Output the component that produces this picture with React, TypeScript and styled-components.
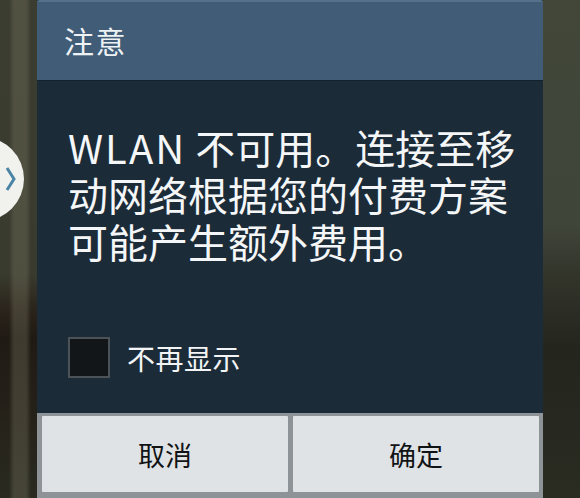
import styled, { createGlobalStyle } from "styled-components";

const GlobalStyle = createGlobalStyle`
  html, body {
    margin: 0;
    padding: 0;
    background: #2e3027;
  }
  body {
    font-family: "Noto Sans CJK SC", "Noto Sans", sans-serif;
  }
`;

const Screen = styled.div`
  width: 580px;
  height: 498px;
  display: flex;
  overflow: hidden;
`;

const SideStrip = styled.div<{ $side: "left" | "right" }>`
  position: relative;
  width: 37px;
  flex-shrink: 0;
  background: ${({ $side }) =>
    $side === "left"
      ? `linear-gradient(90deg, transparent 0 9px, rgba(120,118,95,0.35) 14px, rgba(120,118,95,0.35) 26px, transparent 31px),
         linear-gradient(180deg, #3b3d31 0%, #3a3b2f 55%, #2a241c 62%, #201a14 68%, #2a2a20 100%)`
      : `linear-gradient(180deg, #42473a 0%, #40453a 45%, #33352b 55%, #24251d 70%, #2a2c22 100%)`};
`;

const Handle = styled.div`
  position: absolute;
  left: -60px;
  top: 137px;
  width: 84px;
  height: 84px;
  border-radius: 50%;
  background: #f1f2ee;
  display: flex;
  align-items: center;
  justify-content: flex-end;
  padding-right: 8px;
  box-sizing: border-box;
`;

const Dialog = styled.div`
  width: 506px;
  flex-shrink: 0;
  display: flex;
  flex-direction: column;
  border-radius: 3px 3px 0 0;
  overflow: hidden;
`;

const TitleBar = styled.div`
  height: 81px;
  background: #405c77;
  border-top: 2px solid #56718b;
  border-bottom: 1px solid #14212b;
  box-sizing: border-box;
  display: flex;
  align-items: center;
  padding-left: 27px;
  padding-bottom: 2px;
`;

const Title = styled.h1`
  margin: 0;
  font-size: 30px;
  font-weight: 400;
  color: #eef2f5;
  letter-spacing: 1.5px;
`;

const Body = styled.div`
  flex: 1;
  background: #1b2b38;
  padding: 43px 26px 0 31px;
  display: flex;
  flex-direction: column;
`;

const Message = styled.p`
  margin: 0;
  font-size: 40px;
  line-height: 47px;
  color: #f4f6f7;
  white-space: nowrap;
`;

const Latin = styled.span`
  letter-spacing: 2px;
`;

const CheckRow = styled.label`
  margin-top: 72px;
  display: flex;
  align-items: center;
  gap: 17px;
`;

const CheckBox = styled.span`
  width: 42px;
  height: 41px;
  box-sizing: border-box;
  background: #121619;
  border: 2px solid #4b5258;
`;

const CheckLabel = styled.span`
  font-size: 28px;
  color: #f2f4f5;
  letter-spacing: 0.5px;
`;

const ButtonBar = styled.div`
  height: 85px;
  box-sizing: border-box;
  background: #8e9397;
  padding: 3px 4px 6px 5px;
  display: flex;
  gap: 5px;
`;

const Button = styled.button`
  flex: 1;
  border: none;
  border-radius: 1px;
  background: #dfe3e6;
  font-family: "Noto Sans CJK SC", "Noto Sans", sans-serif;
  font-size: 27px;
  color: #111315;
  padding: 0;
`;

export default function App() {
  return (
    <>
      <GlobalStyle />
      <Screen>
        <SideStrip $side="left">
          <Handle>
            <svg width="11" height="26" viewBox="0 0 11 26">
              <path
                d="M2 2 L9 13 L2 24"
                fill="none"
                stroke="#4c84a6"
                strokeWidth="3"
                strokeLinejoin="miter"
              />
            </svg>
          </Handle>
        </SideStrip>
        <Dialog>
          <TitleBar>
            <Title>注意</Title>
          </TitleBar>
          <Body>
            <Message>
              <Latin>WLAN</Latin> 不可用。连接至移
              <br />
              动网络根据您的付费方案
              <br />
              可能产生额外费用。
            </Message>
            <CheckRow>
              <CheckBox />
              <CheckLabel>不再显示</CheckLabel>
            </CheckRow>
          </Body>
          <ButtonBar>
            <Button>取消</Button>
            <Button>确定</Button>
          </ButtonBar>
        </Dialog>
        <SideStrip $side="right" />
      </Screen>
    </>
  );
}
